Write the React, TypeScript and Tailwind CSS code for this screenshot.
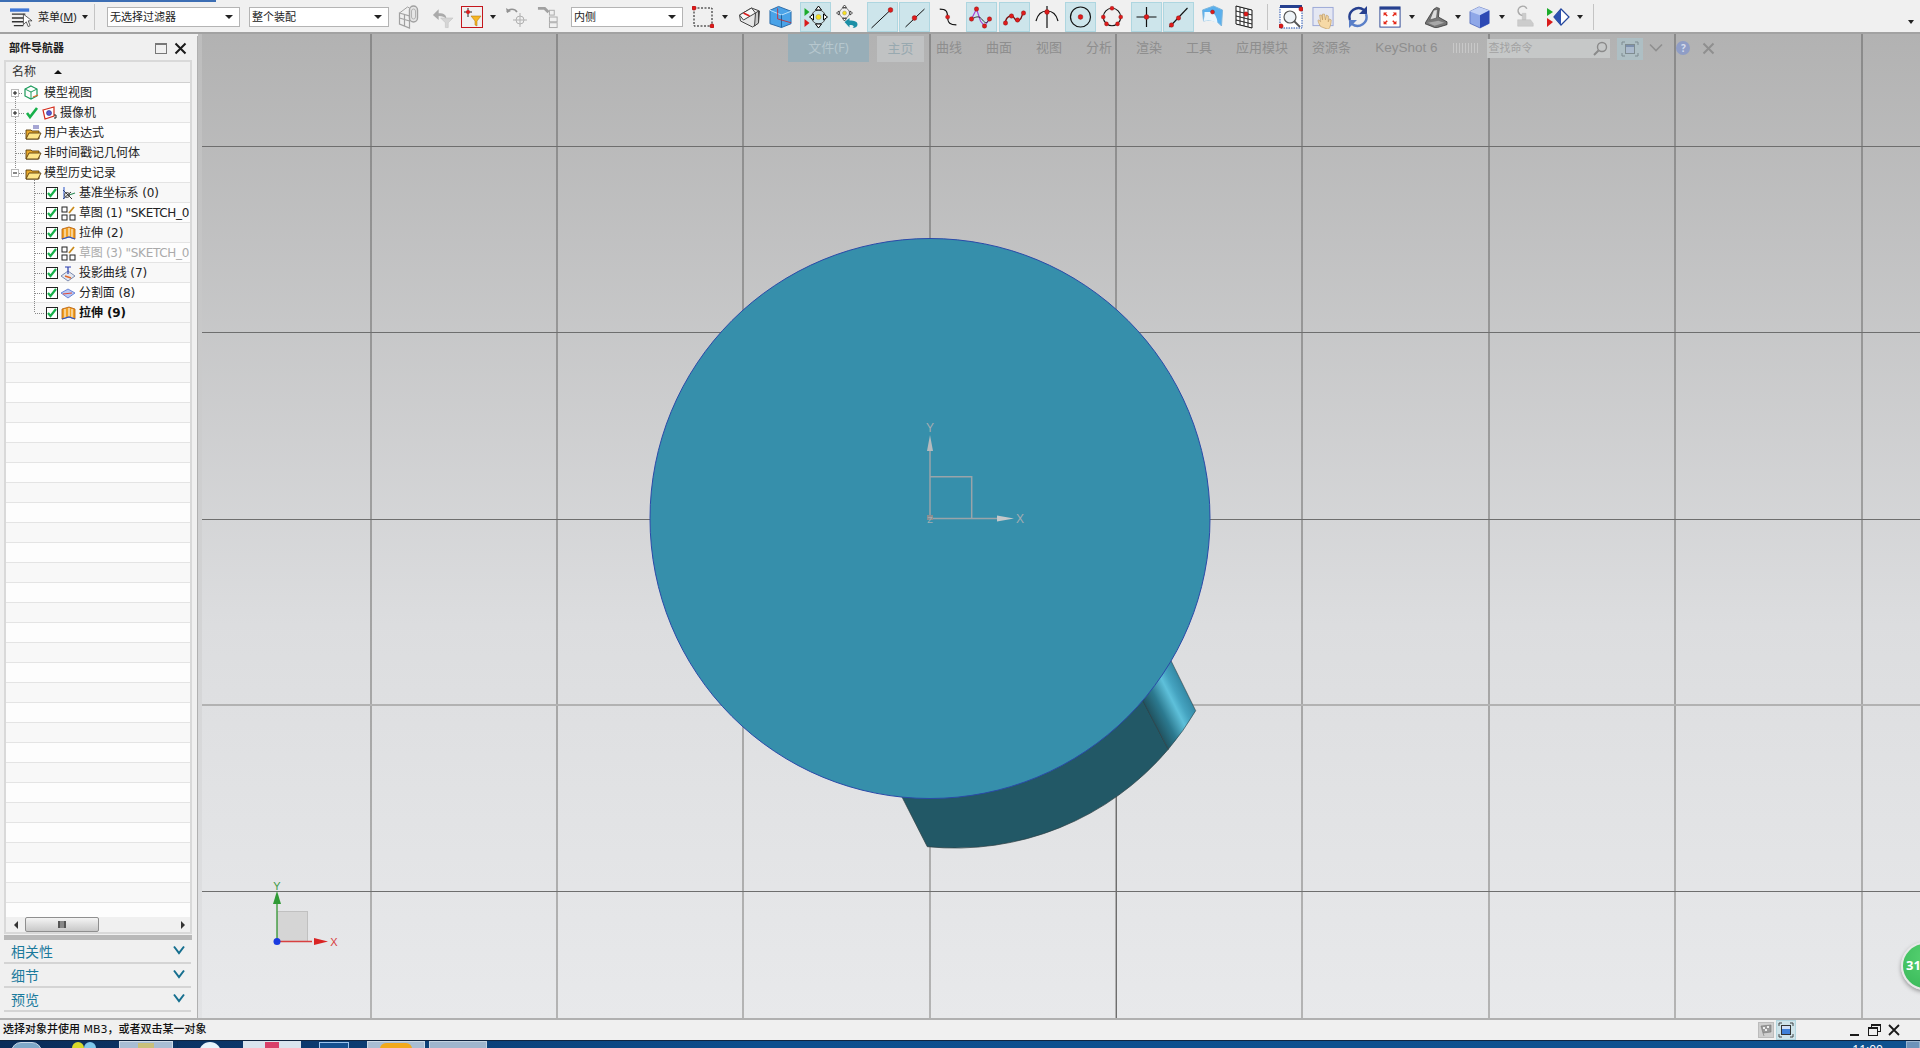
import React from "react";

const Dot = ({ x, y, r = 2.2 }: { x: number; y: number; r?: number }) => (
  <circle cx={x} cy={y} r={r} fill="#e01b1b" stroke="#7a0f0f" strokeWidth="0.4" />
);

const Ico = ({ children }: { children: React.ReactNode }) => (
  <svg viewBox="0 0 24 24" className="w-full h-[24px]" fill="none">
    {children}
  </svg>
);

const Item = ({ className, children }: { className: string; children: React.ReactNode }) => (
  <div className={`flex items-center justify-center shrink-0 h-[30px] ${className}`}>{children}</div>
);

const Active = ({ className, children }: { className: string; children: React.ReactNode }) => (
  <div className={`flex items-center justify-center shrink-0 h-[30px] w-[31px] bg-[#cde5eb] border border-[#aed6e0] ${className}`}>
    {children}
  </div>
);

const Caret = ({ className }: { className: string }) => (
  <div className={`shrink-0 w-0 h-0 border-l-[3px] border-r-[3px] border-t-[4px] border-l-transparent border-r-transparent border-t-[#222] ${className}`} />
);

const Sep = ({ className }: { className: string }) => <div className={`shrink-0 w-px h-[26px] bg-[#c4c4c4] ${className}`} />;

const Select = ({ label, className }: { label: string; className: string }) => (
  <div className={`shrink-0 h-[20px] flex items-center justify-between bg-white border border-[#b4b4b4] pl-[2px] pr-[6px] text-[11px] text-[#222] ${className}`}>
    <span>{label}</span>
    <div className="w-0 h-0 border-l-[4px] border-r-[4px] border-t-[4px] border-l-transparent border-r-transparent border-t-[#222]" />
  </div>
);

function Toolbar() {
  return (
    <div className="relative h-[34px] shrink-0 flex items-center bg-[#f0f0f0] border-b-2 border-[#a2a2a2] pt-[2px]">
      <div className="absolute left-0 top-0 w-[216px] h-[2px] bg-[#3c6eb4]" />
      <div className="shrink-0 ml-[10px] w-[23px] h-[24px]">
        <Ico>
          <rect x="0" y="3" width="20" height="3.500" fill="#3f78d8" />
          <path d="M2 9h14M2 13h14M2 17h12M4 21h10" stroke="#333" strokeWidth="1.4" />
          <path d="M14 9l0 11 3-3 2 5 2-1-2-5h4z" fill="#fff" stroke="#333" strokeWidth="0.8" />
        </Ico>
      </div>
      <span className="ml-[5px] w-[40px] text-[11px] text-[#222] whitespace-nowrap">
        菜单(<span className="underline">M</span>)
      </span>
      <Caret className="ml-[4px]" />
      <Sep className="ml-[6px]" />
      <Select label="无选择过滤器" className="ml-[12px] w-[133px]" />
      <Select label="整个装配" className="ml-[9px] w-[140px]" />
      <Item className="ml-[8px] w-[25px] opacity-50">
        <Ico>
          <path d="M2 8l10 3v12L2 19zM2 13l10 3M7 9v12" stroke="#555" strokeWidth="1.200" />
          <path d="M2 8l8-6 2 1" stroke="#555" />
          <path d="M12 5a4 4 0 0 1 8 0v8a4 4 0 0 1-8 0z" stroke="#555" strokeWidth="1.400" fill="#ddd" />
          <path d="M14 6a2 2 0 0 1 4 0v6a2 2 0 0 1-4 0z" stroke="#777" />
        </Ico>
      </Item>
      <Item className="ml-[9px] w-[23px] opacity-50">
        <Ico>
          <path d="M2 10l6-6v4c6 0 8 2 8 6-2-2-4-3-8-3v4z" fill="#666" />
          <path d="M10 13h13l-5 5v5h-3v-5z" fill="#bbb" stroke="#888" strokeWidth="0.5" />
        </Ico>
      </Item>
      <Item className="ml-[7px] w-[22px] !h-[22px] border border-[#c4161c]">
        <svg viewBox="0 0 20 20" className="w-[20px] h-[20px]" fill="none">
          <path d="M6 1v9M2 5h8" stroke="#111" strokeWidth="0.9" />
          <circle cx="6" cy="5" r="2" fill="#d91c1c" />
          <path d="M9 9h10l-4 5v5l-2-1v-4z" fill="#f6b622" stroke="#a86f06" strokeWidth="0.5" />
        </svg>
      </Item>
      <Caret className="ml-[7px]" />
      <Item className="ml-[9px] w-[24px] opacity-60">
        <Ico>
          <path d="M2 7a6 6 0 0 1 10 0" stroke="#555" strokeWidth="1.6" />
          <path d="M1 3l1 5 4-2z" fill="#555" />
          <circle cx="15" cy="15" r="4" stroke="#888" />
          <path d="M15 8v14M8 15h14" stroke="#888" />
        </Ico>
      </Item>
      <Item className="ml-[8px] w-[23px] opacity-50">
        <Ico>
          <path d="M1 3h7l4 4" stroke="#555" strokeWidth="3" />
          <rect x="13" y="5" width="5" height="5" stroke="#666" />
          <rect x="13" y="12" width="8" height="5" stroke="#666" />
          <rect x="13" y="18" width="8" height="5" stroke="#666" />
        </Ico>
      </Item>
      <Select label="内侧" className="ml-[11px] w-[112px]" />
      <Item className="ml-[9px] w-[22px]">
        <svg viewBox="0 0 22 22" className="w-[22px] h-[22px]" fill="none">
          <rect x="2" y="2" width="18" height="18" stroke="#111" strokeDasharray="2 1.5" />
          <Dot x={2} y={2} />
          <Dot x={20} y={20} />
        </svg>
      </Item>
      <Caret className="ml-[8px]" />
      <Item className="ml-[9px] w-[25px]">
        <Ico>
          <path d="M2 10l12-7 8 3-1 12-6 4-12-6z" fill="#e6e6e6" stroke="#444" />
          <path d="M2 10l12-7 4 5-12 7z" fill="#f7f7f7" stroke="#444" />
          <path d="M6 8l6 3" stroke="#d91c1c" strokeWidth="1.6" />
          <path d="M18 8l3-2v12l-4 3z" fill="#c8c8c8" stroke="#444" />
        </Ico>
      </Item>
      <Item className="ml-[7px] w-[23px]">
        <Ico>
          <path d="M1 5l9-4 13 5v13l-10 4L1 19z" fill="#4aa3e8" stroke="#2a6aa8" />
          <path d="M1 5l12 5 10-4" stroke="#bfe3fa" />
          <path d="M13 10v13" stroke="#1f5f98" />
          <path d="M9 3v11l14 4" stroke="#d91c1c" strokeWidth="0.8" />
        </Ico>
      </Item>
      <Active className="ml-[8px]">
        <Ico>
          <path d="M1 3l5 4-5 4z" fill="#1bab2a" />
          <path d="M1 14l5 4-5 4z" fill="#d91c1c" />
          <circle cx="15" cy="12" r="7" stroke="#555" />
          <circle cx="15" cy="12" r="2.600" fill="#f7e01e" stroke="#997" strokeWidth="0.5" />
          <path d="M15 1l-3 4h6zM15 23l-3-4h6zM6 12l4-3v6zM24 12l-4-3v6z" fill="#fff" stroke="#000" strokeWidth="1" />
        </Ico>
      </Active>
      <Item className="ml-[4px] w-[25px]">
        <Ico>
          <circle cx="9" cy="8" r="5" stroke="#777" />
          <circle cx="9" cy="8" r="2" fill="#f7e01e" stroke="#997" strokeWidth="0.5" />
          <path d="M9 0l-2 2.500h4zM9 16l-2-2.500h4zM1 8l2.500-2v4zM17 8l-2.500-2v4z" fill="#fff" stroke="#111" strokeWidth="0.7" />
          <path d="M9 17l5-4v2.500c5 0 8 1 8 4 0 2-2 3.500-5 3.500 2-1 2-3-3-3v2.500z" fill="#1c8fa6" />
        </Ico>
      </Item>
      <Active className="ml-[7px] w-[30px]">
        <Ico>
          <path d="M1 23L20 5" stroke="#111" />
          <Dot x={20} y={5} r={2.4} />
        </Ico>
      </Active>
      <Active className="ml-[1px]">
        <Ico>
          <path d="M3 22L22 4" stroke="#111" />
          <Dot x={12} y={13} r={2.4} />
        </Ico>
      </Active>
      <Item className="ml-[8px] w-[21px]">
        <Ico>
          <path d="M2 3c7 0 9 2 9 9s3 9 10 9" stroke="#111" strokeWidth="1.2" />
          <Dot x={11} y={12} r={2.4} />
        </Ico>
      </Item>
      <Active className="ml-[7px]">
        <Ico>
          <path d="M2 14L7 4l4 12 4 5 5-7" stroke="#a53fd6" strokeWidth="1.1" />
          <path d="M2 14c6-3 8-3 11 1s5 3 7-1" stroke="#111" strokeWidth="0.8" />
          <Dot x={2} y={14} />
          <Dot x={7} y={4} />
          <Dot x={15} y={21} />
          <Dot x={20} y={14} />
        </Ico>
      </Active>
      <Active className="ml-[2px]">
        <Ico>
          <path d="M3 18c0-6 6-9 8-6s3 5 6 3 2-6 4-7" stroke="#7a0f0f" strokeWidth="1.3" />
          <Dot x={3} y={18} />
          <Dot x={9} y={11} />
          <Dot x={15} y={15} />
          <Dot x={21} y={8} />
        </Ico>
      </Active>
      <Item className="ml-[5px] w-[24px]">
        <Ico>
          <path d="M1 16C3 8 8 6 12 6s9 2 11 10M12 1v22" stroke="#111" strokeWidth="1.2" />
          <Dot x={12} y={7} r={2.4} />
        </Ico>
      </Item>
      <Active className="ml-[6px]">
        <Ico>
          <circle cx="12" cy="12" r="10" stroke="#111" strokeWidth="1.2" />
          <Dot x={12} y={12} r={2.4} />
        </Ico>
      </Active>
      <Item className="ml-[5px] w-[22px]">
        <Ico>
          <circle cx="12" cy="12" r="9.500" stroke="#111" strokeWidth="1.2" />
          <Dot x={12} y={2.500} />
          <Dot x={2.500} y={12} />
          <Dot x={21.500} y={12} />
          <Dot x={6} y={19.500} />
          <Dot x={18} y={19.500} />
        </Ico>
      </Item>
      <Active className="ml-[8px]">
        <Ico>
          <path d="M12 2v20M2 12h20" stroke="#111" strokeWidth="1.2" />
          <Dot x={12} y={12} r={2.4} />
        </Ico>
      </Active>
      <Active className="ml-[1px]">
        <Ico>
          <path d="M3 22L21 3" stroke="#111" strokeWidth="1.1" />
          <Dot x={5} y={20} />
          <Dot x={12} y={13} />
        </Ico>
      </Active>
      <Item className="ml-[5px] w-[25px]">
        <Ico>
          <path d="M3 5l11-4 9 4-1 16c-4-5-10-7-18-5z" fill="#5ab0ee" stroke="#7fb7dd" />
          <path d="M5 7c0 3 0 5-1 9 5-1 10-1 14 3 0-5-2-10-6-12z" fill="#eaf5fc" />
          <Dot x={13} y={7} r={2} />
        </Ico>
      </Item>
      <Item className="ml-[11px] w-[18px]">
        <svg viewBox="0 0 18 24" className="w-[18px] h-[24px]" fill="none">
          <path d="M1 1l16 4v18L1 19z" fill="#fff" stroke="#111" />
          <path d="M1 6l16 4M1 11l16 4M1 15l16 4M5 2v18M9 3v18M13 4v18" stroke="#111" strokeWidth="0.9" />
          <Dot x={11} y={9} />
        </svg>
      </Item>
      <Sep className="ml-[14px]" />
      <Item className="ml-[11px] w-[24px]">
        <Ico>
          <rect x="1" y="2" width="22" height="21" fill="#fff" stroke="#1f4fb0" strokeDasharray="1.500 1" />
          <rect x="1" y="0" width="22" height="3" fill="#26408f" />
          <circle cx="11" cy="12" r="6" fill="#eef3f7" stroke="#555" strokeWidth="1.2" />
          <path d="M15 16l6 6" stroke="#555" strokeWidth="1.8" />
          <Dot x={22} y={4} />
          <Dot x={2} y={21} />
        </Ico>
      </Item>
      <Item className="ml-[9px] w-[23px]">
        <Ico>
          <rect x="1" y="2" width="21" height="19" fill="#e4e7f3" stroke="#9aa7d6" />
          <path d="M9 22c-3-5-3-7-2-7l2 2-1-7 2 0 1 5 0-6 2 0 1 6 1-5 2 1 0 6 1-3 2 1c0 4-1 8-3 10z" fill="#f6d9a6" stroke="#b88f52" strokeWidth="0.6" />
        </Ico>
      </Item>
      <Item className="ml-[11px] w-[24px]">
        <Ico>
          <path d="M4 15A9 9 0 0 1 18 5" stroke="#26408f" strokeWidth="2.4" />
          <path d="M21 1v8h-8z" fill="#26408f" />
          <path d="M20 9A9 9 0 0 1 6 19" stroke="#5a7fc8" strokeWidth="2.4" />
          <path d="M3 23v-8h8z" fill="#5a7fc8" />
        </Ico>
      </Item>
      <Item className="ml-[9px] w-[22px]">
        <Ico>
          <rect x="1" y="1" width="22" height="22" fill="#fff" stroke="#26408f" />
          <rect x="1" y="1" width="22" height="3" fill="#26408f" />
          <path d="M6 8l3 3M18 8l-3 3M6 19l3-3M18 19l-3-3" stroke="#e52a1a" strokeWidth="1.6" />
          <path d="M5 7h4l-4 4zM19 7h-4l4 4zM5 20h4l-4-4zM19 20h-4l4-4z" fill="#e52a1a" />
        </Ico>
      </Item>
      <Caret className="ml-[8px]" />
      <Item className="ml-[10px] w-[23px]">
        <Ico>
          <path d="M1 17L9 4l3-2 3 1-1 9 9 5v3l-10 3-3 0-10-4z" fill="#777" stroke="#222" strokeWidth="0.7" />
          <path d="M9 5l4-1-1 9-7 2z" fill="#dcdcdc" stroke="#333" strokeWidth="0.5" />
          <path d="M3 18l11-2 6 2-10 3z" fill="#a8a8a8" />
        </Ico>
      </Item>
      <Caret className="ml-[7px]" />
      <Item className="ml-[8px] w-[22px]">
        <Ico>
          <path d="M1 6l10-5 11 4v14l-10 5-11-5z" fill="#8ea7e8" stroke="#2b45a8" strokeWidth="0.6" />
          <path d="M1 6l11 4 10-5-11-4z" fill="#c3d2f6" />
          <path d="M12 10l10-5v14l-10 5z" fill="#2d49b4" />
        </Ico>
      </Item>
      <Caret className="ml-[8px]" />
      <Item className="ml-[9px] w-[22px] opacity-50">
        <Ico>
          <path d="M11 10a5 5 0 1 1 3-7" stroke="#666" strokeWidth="1.6" />
          <path d="M9 8h4v7H9zM4 15h14l3 4v3H4z" fill="#aaa" stroke="#888" strokeWidth="0.5" />
        </Ico>
      </Item>
      <Item className="ml-[10px] w-[24px]">
        <Ico>
          <path d="M1 3l6 4-6 4z" fill="#1bab2a" />
          <path d="M1 13l6 4-6 5z" fill="#d91c1c" />
          <path d="M8 12l7-8 8 8-8 8z" fill="#fff" stroke="#25479c" strokeWidth="1.2" />
          <path d="M15 4v16l-7-8z" fill="#2c50b0" />
        </Ico>
      </Item>
      <Caret className="ml-[7px]" />
      <Sep className="ml-[10px]" />
      <Caret className="ml-auto mr-[6px] mt-[10px]" />
    </div>
  );
}

const Folder = ({ x = 25, note = false }: { x?: number; note?: boolean }) => (
  <g transform={`translate(${x} 3)`}>
    {note && <path d="M8 0h6M8 2h6" stroke="#3a3aa0" strokeWidth="0.9" />}
    <path d="M1 4h5l1 1h7v8H1z" fill="#e8a92c" stroke="#5a3c0c" strokeWidth="0.9" />
    <path d="M1 13l3-6h12l-3 6z" fill="#ffe68a" stroke="#5a3c0c" strokeWidth="0.9" />
  </g>
);

const Box = ({ x = 15, plus = true }: { x?: number; plus?: boolean }) => (
  <g>
    <rect x={x - 3.500} y="6.500" width="7" height="7" fill="#fff" stroke="#bbb" />
    <path d={`M${x - 2} 10h4`} stroke="#111" />
    {plus && <path d={`M${x} 8v4`} stroke="#111" />}
  </g>
);

const Dotted = ({ d }: { d: string }) => <path d={d} stroke="#888" strokeDasharray="1 1" />;

const Check = () => (
  <g>
    <rect x="46.500" y="4.500" width="11" height="11" fill="#fff" stroke="#222" />
    <path d="M48 10l2.500 3 5.500-7" stroke="#17b04a" strokeWidth="2.2" fill="none" />
  </g>
);

const SketchIco = () => (
  <g transform="translate(61 3)" fill="none" stroke="#222" strokeWidth="1">
    <rect x="1" y="1" width="5" height="5" />
    <rect x="1" y="9" width="5" height="5" />
    <rect x="9" y="9" width="5" height="5" />
    <path d="M8 7l5-6" stroke="#c98a1a" strokeWidth="1.800" />
  </g>
);

const ExtrudeIco = () => (
  <g transform="translate(61 3)">
    <path d="M1 3l7-2 6 2v10l-6-2-7 2z" fill="#f1a024" stroke="#b55a0a" strokeWidth="0.8" />
    <path d="M4 3v9M8 2v9M11 3v9" stroke="#fff" strokeWidth="1" />
    <path d="M1 13l7-2 6 2" stroke="#2b55c8" strokeWidth="1.200" fill="none" />
  </g>
);

const icons: Record<string, React.ReactNode> = {
  datum: (
    <g transform="translate(61 3)" fill="none">
      <path d="M2 4l9 9M2 13l8-7" stroke="#333" />
      <path d="M3 1v12" stroke="#2b55c8" />
      <path d="M8 9l6-2" stroke="#2e8b57" strokeWidth="1.200" />
      <circle cx="6" cy="9" r="2.500" stroke="#555" />
    </g>
  ),
  sketch: <SketchIco />,
  extrude: <ExtrudeIco />,
  project: (
    <g transform="translate(60 2)" fill="none">
      <path d="M1 11l7-5 7 5-7 5z" fill="#e3e7f0" stroke="#7c8bb0" />
      <path d="M5 2h6M8 2v7" stroke="#2b3fb0" strokeWidth="1.200" />
      <path d="M5 11l6 2" stroke="#e0662a" strokeWidth="1.500" />
    </g>
  ),
  split: (
    <g transform="translate(60 4)">
      <path d="M1 6l7-4 7 4-7 5z" fill="#b8c8f4" stroke="#4f6ed0" strokeWidth="0.8" />
      <path d="M3 7l9-1" stroke="#e04a3a" strokeWidth="1" />
    </g>
  ),
};

const Row = ({ alt, children, gw, label, cls = "" }: { alt: boolean; children?: React.ReactNode; gw?: number; label?: string; cls?: string }) => (
  <div className={`h-[20px] shrink-0 flex items-center border-b border-[#e4e4e4] whitespace-nowrap ${alt ? "bg-[#f8f8f8]" : "bg-[#fdfdfd]"}`}>
    {gw && (
      <svg width={gw} height="20" className="shrink-0 -ml-[6px]" fill="none">
        {children}
      </svg>
    )}
    {label && <span className={`text-[12px] font-['DejaVu_Sans','Noto_Sans_CJK_SC',sans-serif] ${cls}`}>{label}</span>}
  </div>
);

const hist = [
  ["datum", "基准坐标系 (0)", "text-[#222] tracking-[-0.1px]"],
  ["sketch", '草图 (1) "SKETCH_0', "text-[#222] tracking-[-0.3px]"],
  ["extrude", "拉伸 (2)", "text-[#222] tracking-[-0.1px]"],
  ["sketch", '草图 (3) "SKETCH_0', "text-[#aaa] tracking-[-0.3px]"],
  ["project", "投影曲线 (7)", "text-[#222] tracking-[-0.1px]"],
  ["split", "分割面 (8)", "text-[#222] tracking-[-0.1px]"],
  ["extrude", "拉伸 (9)", "text-[#111] font-bold tracking-[-0.1px]"],
];

const Section = ({ label }: { label: string }) => (
  <div className="h-[24px] shrink-0 mx-[1px] flex items-center justify-between pl-[7px] pr-[6px] border-b-2 border-[#d4d4d4] text-[14px] text-[#1b7a9c]">
    <span>{label}</span>
    <svg width="12" height="10" viewBox="0 0 12 10" fill="none" className="mb-[3px]">
      <path d="M1 1.500l5 6.500 5-6.500" stroke="#166f8f" strokeWidth="2" />
    </svg>
  </div>
);

function Navigator() {
  const empties = Array.from({ length: 33 }, (_, i) => i);
  return (
    <div className="w-[198px] shrink-0 bg-[#f0f0f0] border-r border-[#b0b0b0] pl-[3px] pr-[5px] pb-[6px] mt-[2px] flex flex-col">
      <div className="h-[24px] shrink-0 flex items-center pl-[6px] text-[11px] font-semibold text-[#222]">
        <span>部件导航器</span>
        <svg width="12" height="11" className="ml-[91px]" fill="none">
          <rect x="0.500" y="0.500" width="11" height="10" stroke="#777" />
          <path d="M0 1.500h12" stroke="#777" />
        </svg>
        <svg width="13" height="13" className="ml-[7px]" fill="none">
          <path d="M1.500 1.500l10 10M11.500 1.500l-10 10" stroke="#1a1a1a" strokeWidth="2" />
        </svg>
      </div>
      <div className="ml-[1px] flex-1 min-h-0 flex flex-col border-2 border-[#d9d9d9] bg-white overflow-hidden">
        <div className="h-[21px] shrink-0 flex items-center bg-[#f0f0f0] border-b border-[#d0d0d0] pl-[6px] text-[12px] text-[#333]">
          <span>名称</span>
          <div className="ml-[18px] w-0 h-0 border-l-[4px] border-r-[4px] border-b-[4px] border-l-transparent border-r-transparent border-b-[#111]" />
        </div>
        <div className="flex-1 min-h-0 flex flex-col overflow-hidden">
          <Row alt={false} gw={44} label="模型视图" cls="text-[#222]">
            <Dotted d="M15.500 10v10M19 10.500h4" />
            <Box />
            <g transform="translate(24 2)">
              <path d="M7 1l6 3v7l-6 3-6-3V4z" stroke="#1c9a5a" strokeWidth="1.200" />
              <path d="M1 4l6 3 6-3M7 7v7" stroke="#1c9a5a" />
              <path d="M9 12l5-2" stroke="#e0662a" strokeWidth="1.200" />
            </g>
          </Row>
          <Row alt gw={60} label="摄像机" cls="text-[#222]">
            <Dotted d="M15.500 0v20M19 10.500h6" />
            <Box />
            <path d="M27 10l3 4 7-9" stroke="#17b04a" strokeWidth="2.600" />
            <g transform="translate(42 3)">
              <path d="M1 4l11-3v9L3 13z" fill="#fff" stroke="#d42a1a" strokeWidth="1.200" />
              <circle cx="7" cy="7" r="2.500" fill="#5a5ad0" stroke="#2a2a88" strokeWidth="0.6" />
              <path d="M12 9h2v3h-2" stroke="#222" />
            </g>
          </Row>
          <Row alt={false} gw={44} label="用户表达式" cls="text-[#222]">
            <Dotted d="M15.500 0v20M16 10.500h9" />
            <Folder note />
          </Row>
          <Row alt gw={44} label="非时间戳记几何体" cls="text-[#222]">
            <Dotted d="M15.500 0v20M16 10.500h9" />
            <Folder />
          </Row>
          <Row alt={false} gw={44} label="模型历史记录" cls="text-[#222]">
            <Dotted d="M15.500 0v6M19 10.500h6M34.500 17v3" />
            <Box plus={false} />
            <Folder />
          </Row>
          {hist.map(([ic, label, cls], i) => (
            <Row key={i} alt={i % 2 === 0} gw={79} label={label} cls={cls}>
              <Dotted d={i === hist.length - 1 ? "M34.500 0v10M35 10.500h10" : "M34.500 0v20M35 10.500h10"} />
              <Check />
              {icons[ic]}
            </Row>
          ))}
          {empties.map((i) => (
            <Row key={i} alt={i % 2 === 0} />
          ))}
        </div>
        <div className="h-[15px] shrink-0 flex items-center bg-[#f0f0f0] relative">
          <div className="ml-[8px] w-0 h-0 border-t-[4px] border-b-[4px] border-r-[4px] border-t-transparent border-b-transparent border-r-[#333]" />
          <div className="ml-[7px] w-[74px] h-[15px] flex items-center justify-center rounded-[2px] border border-[#8f8f8f] bg-gradient-to-b from-[#f4f4f4] to-[#c8c8c8]">
            <div className="w-[8px] h-[7px] border-x-2 border-[#555] bg-[#888]" />
          </div>
          <div className="ml-auto mr-[5px] w-0 h-0 border-t-[4px] border-b-[4px] border-l-[4px] border-t-transparent border-b-transparent border-l-[#333]" />
        </div>
      </div>
      <div className="h-[5px] shrink-0 ml-[1px] mt-[1px] bg-[#b9b9b9]" />
      <Section label="相关性" />
      <Section label="细节" />
      <Section label="预览" />
    </div>
  );
}

const vLines = [371, 557, 743, 930, 1116, 1302, 1489, 1675, 1862];

function Scene() {
  return (
    <svg viewBox="202 34 1718 984" className="absolute inset-0 w-full h-full" fill="none">
      <defs>
        <linearGradient id="vl" gradientUnits="userSpaceOnUse" x1="0" y1="34" x2="0" y2="1018">
          <stop offset="0" stopColor="#8a8a8a" />
          <stop offset="1" stopColor="#b4b4b4" />
        </linearGradient>
        <linearGradient id="cyl" gradientUnits="userSpaceOnUse" x1="1142.700" y1="700.700" x2="1181" y2="681.500">
          <stop offset="0" stopColor="#20525f" />
          <stop offset="0.3" stopColor="#2c7a90" />
          <stop offset="0.62" stopColor="#5ec0da" />
          <stop offset="0.78" stopColor="#45a3c0" />
          <stop offset="1" stopColor="#358aa6" />
        </linearGradient>
      </defs>
      {vLines.map((x) => (
        <rect key={x} x={x - 1} y="34" width="2" height="984" fill="url(#vl)" />
      ))}
      {[146, 332, 519, 891].map((y) => (
        <rect key={y} x="202" y={y} width="1718" height="1" fill="#6e6e6e" />
      ))}
      <rect x="202" y="704" width="1718" height="2" fill="#b2b2b2" />
      <rect x="1116" y="700" width="1" height="318" fill="#6e6e6e" />

      <path d="M902 797L927.300 846.700A280 280 0 0 0 1168.300 749.300L1142.700 700Z" fill="#225866" stroke="#2e3d42" strokeWidth="0.7" />
      <path d="M1142.700 700.700L1168.300 749.300A280 280 0 0 0 1195.700 710.700L1171 660.700Z" fill="url(#cyl)" stroke="#2e3d42" strokeWidth="0.6" />
      <circle cx="930" cy="518.500" r="280" fill="#368fab" stroke="#2a4aa8" strokeWidth="1" />

      <g stroke="#9aa4a9" strokeWidth="1.500">
        <path d="M930 518.500V445M930 476.700H971.700V518.500M930 518.500H1000" />
      </g>
      <path d="M930 435l-3 16h6z" fill="#b5babd" />
      <path d="M1014 518.500l-17-3v6z" fill="#c4c8ca" />
      <rect x="927" y="515" width="6" height="5" fill="#8a8e90" />
      <text x="930" y="432" textAnchor="middle" fontSize="12" fill="#a4adb2" fontFamily="Liberation Sans, sans-serif">Y</text>
      <text x="1020" y="523" textAnchor="middle" fontSize="12" fill="#a4adb2" fontFamily="Liberation Sans, sans-serif">X</text>
      <text x="930" y="523" textAnchor="middle" fontSize="9" fill="#a4adb2" fontFamily="Liberation Sans, sans-serif">Z</text>

      <rect x="277.500" y="911.500" width="30" height="30" fill="#d5d5d5" stroke="#c0c0c0" />
      <path d="M277 941V900" stroke="#4aa04a" strokeWidth="1.500" />
      <path d="M277 891l-4 13h8z" fill="#2f9a35" />
      <path d="M277 941.500h35" stroke="#d84040" strokeWidth="1.500" />
      <path d="M328 941.500l-14-3.500v7z" fill="#d92424" />
      <circle cx="277" cy="941.500" r="3.500" fill="#1a3be0" />
      <text x="277" y="890" textAnchor="middle" fontSize="11" fill="#3f9a45" fontFamily="Liberation Sans, sans-serif">Y</text>
      <text x="334" y="946" textAnchor="middle" fontSize="11" fill="#d84040" fontFamily="Liberation Sans, sans-serif">X</text>
    </svg>
  );
}

function Ribbon() {
  return (
    <div className="absolute top-0 left-0 right-0 h-[28px] flex items-end text-[13px] text-[#8e8e8e]">
      <div className="ml-[586px] w-[81px] h-[28px] flex items-center justify-center bg-[#98aeb8] text-[#b6c7ce]">文件(F)</div>
      <div className="ml-[8px] w-[47px] h-[26px] flex items-center justify-center bg-[#c0c2c3] text-[#98a9b0]">主页</div>
      <div className="ml-[12px] h-[28px] flex items-center gap-6 whitespace-nowrap">
        <span>曲线</span>
        <span>曲面</span>
        <span>视图</span>
        <span>分析</span>
        <span>渲染</span>
        <span>工具</span>
        <span>应用模块</span>
        <span>资源条</span>
        <span className="font-['Liberation_Sans',sans-serif] text-[13.5px]">KeyShot 6</span>
      </div>
      <div className="h-[28px] ml-[16px] w-[27px] flex items-center">
        <div className="w-[27px] h-[10px] bg-[repeating-linear-gradient(90deg,#c8c8c8_0,#c8c8c8_1px,transparent_1px,transparent_3px)]" />
      </div>
      <div className="ml-[7px] mb-[4px] w-[123px] h-[19px] flex items-center justify-between bg-[#c6c8c8] pl-[1px] pr-[2px] text-[11px] text-[#a2a2a2]">
        <span>查找命令</span>
        <svg width="16" height="16" viewBox="0 0 16 16" fill="none">
          <circle cx="10" cy="6" r="4.500" stroke="#8a8a8a" strokeWidth="1.400" />
          <path d="M6.500 9.500L2 14" stroke="#8a8a8a" strokeWidth="2" />
        </svg>
      </div>
      <div className="ml-[7px] mb-[2px] w-[26px] h-[22px] flex items-center justify-center bg-[#aebfc4]">
        <svg width="18" height="16" viewBox="0 0 18 16" fill="none">
          <path d="M1 4V1h3M14 1h3v3M17 12v3h-3M4 15H1v-3" stroke="#7f8c91" />
          <rect x="4.500" y="3.500" width="9" height="9" fill="#aab9cc" stroke="#7f8c91" />
          <rect x="5" y="4" width="8" height="2" fill="#7d90ac" />
        </svg>
      </div>
      <div className="ml-[6px] mb-[7px] w-[14px] h-[14px] flex items-center justify-center">
        <svg width="14" height="10" viewBox="0 0 14 10" fill="none">
          <path d="M1 1.500l6 6 6-6" stroke="#8f8f8f" strokeWidth="1.600" />
        </svg>
      </div>
      <div className="ml-[13px] mb-[7px] w-[14px] h-[14px] rounded-full bg-[#8f9dc6] text-[#d6dcec] text-[10px] font-bold flex items-center justify-center">?</div>
      <div className="ml-[12px] mb-[7px] w-[13px] h-[14px] flex items-center justify-center">
        <svg width="13" height="13" viewBox="0 0 13 13" fill="none">
          <path d="M1.500 1.500l10 10M11.500 1.500l-10 10" stroke="#8f8f8f" strokeWidth="2" />
        </svg>
      </div>
    </div>
  );
}

function StatusBar() {
  return (
    <div className="h-[22px] shrink-0 flex items-center bg-[#f0f0f0] border-t-2 border-[#b0b0b0] pl-[3px] text-[11px] font-medium text-[#111] font-['DejaVu_Sans','Noto_Sans_CJK_SC',sans-serif]">
      <span>选择对象并使用 MB3，或者双击某一对象</span>
      <div className="ml-auto w-[16px] h-[16px] flex items-center justify-center bg-[#cfcfcf] border border-[#bcbcbc]">
        <svg width="12" height="12" viewBox="0 0 12 12">
          <path d="M1 2l10-1 0 7-8 1zM3 9l1 3" fill="#999" stroke="#777" strokeWidth="0.6" />
          <path d="M3 3h2v2H3zM7 2h2v2H7zM5 5h2v2H5z" fill="#eee" />
        </svg>
      </div>
      <div className="ml-[2px] w-[20px] h-[20px] flex items-center justify-center bg-[#cfe4ea] border border-[#b3d6df]">
        <svg width="16" height="16" viewBox="0 0 16 16" fill="none">
          <path d="M1 4V1h3M12 1h3v3M15 12v3h-3M4 15H1v-3" stroke="#444" />
          <rect x="3.500" y="3.500" width="9" height="9" fill="#3f7fd8" stroke="#333" />
          <rect x="4" y="4" width="8" height="3" fill="#cfe0f8" />
        </svg>
      </div>
      <svg width="9" height="3" className="ml-[54px] mt-[11px]">
        <rect width="9" height="2" fill="#1a1a1a" />
      </svg>
      <svg width="13" height="12" viewBox="0 0 13 12" className="ml-[9px]" fill="none">
        <rect x="3.500" y="0.500" width="9" height="7" stroke="#1a1a1a" />
        <rect x="0.500" y="3.500" width="9" height="8" fill="#f0f0f0" stroke="#1a1a1a" />
        <path d="M0 4.500h10M3 1.500h10" stroke="#1a1a1a" />
      </svg>
      <svg width="12" height="12" viewBox="0 0 12 12" className="ml-[7px] mr-[20px]" fill="none">
        <path d="M1 1l10 10M11 1L1 11" stroke="#1a1a1a" strokeWidth="1.800" />
      </svg>
    </div>
  );
}

function Taskbar() {
  return (
    <div className="h-[8px] shrink-0 overflow-hidden flex items-start bg-[linear-gradient(90deg,#0a2b58_0,#0c4e8e_40%,#0f5290_100%)] border-t border-[#10243f]">
      <div className="ml-[11px] mt-[1px] w-[31px] h-[20px] rounded-full bg-[#7fa8c8] border border-[#c8d8e8]" />
      <div className="ml-[30px] mt-[1px] w-[12px] h-[12px] rounded-full bg-[#d7d82a]" />
      <div className="mt-[1px] w-[12px] h-[12px] rounded-full bg-[#7fc6ea]" />
      <div className="ml-[23px] w-[54px] h-[8px] bg-[#a8bdd4] border border-[#d0dce8] flex justify-center">
        <div className="mt-[1px] w-[16px] h-[8px] bg-[#c9c07a]" />
      </div>
      <div className="ml-[4px] w-px h-[8px] bg-[#08305c]" />
      <div className="ml-[21px] mt-[1px] w-[22px] h-[22px] rounded-full bg-[#e8f4fc]" />
      <div className="ml-[22px] w-[58px] h-[8px] bg-[#d9e4ee] flex justify-center">
        <div className="mt-[1px] w-[14px] h-[8px] bg-[#d8406a]" />
      </div>
      <div className="w-[66px] h-[8px] flex justify-center">
        <div className="mt-[1px] w-[30px] h-[8px] bg-[#15508f] border border-[#9cc4ee]" />
      </div>
      <div className="w-[58px] h-[8px] bg-[#a9bdd3] border border-[#cddae6] flex justify-center">
        <div className="mt-[1px] w-[32px] h-[12px] rounded-t-[6px] bg-[#f2a91c]" />
      </div>
      <div className="ml-[4px] w-[58px] h-[8px] bg-[#9fb5cd] border border-[#c3d2e0]" />
      <span className="ml-auto mt-[3px] text-[12px] leading-[12px] text-white font-['Noto_Sans',sans-serif]">11:00</span>
      <div className="ml-[23px] w-[14px] h-[8px] bg-[#6d93ba] border border-[#9ab6d0]" />
    </div>
  );
}

export default function App() {
  return (
    <div className="w-[1920px] h-[1048px] overflow-hidden flex flex-col bg-[#f0f0f0] font-['Noto_Sans','Noto_Sans_CJK_SC',sans-serif]">
      <Toolbar />
      <div className="flex-1 min-h-0 flex">
        <Navigator />
        <div className="w-[4px] shrink-0 bg-[linear-gradient(180deg,#bdbdbd_0,#e2e3e5_100%)]" />
        <div className="relative flex-1 min-w-0 overflow-hidden bg-[linear-gradient(180deg,#b2b2b2_0%,#dcdddf_60%,#e8e9eb_100%)]">
          <Scene />
          <Ribbon />
          <div className="absolute right-[-29px] top-[908px] w-[48px] h-[48px] rounded-full border-2 border-[#e8e8e8] bg-[radial-gradient(circle_at_50%_30%,#55d070,#37b858)] shadow-[0_2px_4px_rgba(0,0,0,0.35)] flex items-center pl-[3px] text-[13px] font-bold text-white">
            31
          </div>
        </div>
      </div>
      <StatusBar />
      <Taskbar />
    </div>
  );
}
